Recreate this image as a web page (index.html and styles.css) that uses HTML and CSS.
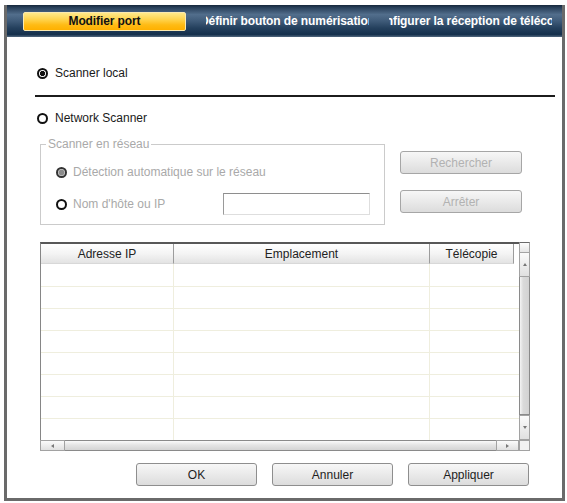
FILE: index.html
```html
<!DOCTYPE html>
<html lang="fr">
<head>
<meta charset="utf-8">
<title>Modifier port</title>
<link rel="stylesheet" href="styles.css">
</head>
<body>
<div class="window">
  <div class="tabbar">
    <div class="tab active"><span>Modifier port</span></div>
    <div class="tab"><span>Définir bouton de numérisation</span></div>
    <div class="tab"><span>Configurer la réception de télécopie</span></div>
  </div>
  <div class="content">
    <div class="radio-row row-local"><span class="radio checked"></span><span>Scanner local</span></div>
    <div class="separator"></div>
    <div class="radio-row row-network"><span class="radio"></span><span>Network Scanner</span></div>
    <div class="section">
      <fieldset class="group">
        <legend>Scanner en réseau</legend>
        <div class="group-body">
          <div class="radio-row disabled row-auto"><span class="radio checked-disabled"></span><span>Détection automatique sur le réseau</span></div>
          <div class="radio-row disabled row-host"><span class="radio"></span><span class="host-label">Nom d'hôte ou IP</span><span class="textbox"></span></div>
        </div>
      </fieldset>
      <div class="side-buttons">
        <div class="btn btn-disabled">Rechercher</div>
        <div class="btn btn-disabled">Arrêter</div>
      </div>
    </div>
    <div class="table">
      <div class="viewport">
        <div class="thead">
          <div class="th c1">Adresse IP</div>
          <div class="th c2">Emplacement</div>
          <div class="th c3">Télécopie</div>
        </div>
        <div class="tbody">
          <div class="tr first"><div class="td c1"></div><div class="td c2"></div><div class="td c3"></div></div>
          <div class="tr"><div class="td c1"></div><div class="td c2"></div><div class="td c3"></div></div>
          <div class="tr"><div class="td c1"></div><div class="td c2"></div><div class="td c3"></div></div>
          <div class="tr"><div class="td c1"></div><div class="td c2"></div><div class="td c3"></div></div>
          <div class="tr"><div class="td c1"></div><div class="td c2"></div><div class="td c3"></div></div>
          <div class="tr"><div class="td c1"></div><div class="td c2"></div><div class="td c3"></div></div>
          <div class="tr"><div class="td c1"></div><div class="td c2"></div><div class="td c3"></div></div>
          <div class="tr"><div class="td c1"></div><div class="td c2"></div><div class="td c3"></div></div>
        </div>
      </div>
      <div class="vscroll">
        <div class="vcorner"></div>
        <div class="sbtn vbtn up"><span class="arrow arrow-up"></span></div>
        <div class="vthumb"></div>
        <div class="sbtn vbtn down"><span class="arrow arrow-down"></span></div>
      </div>
      <div class="hscroll">
        <div class="sbtn hbtn left"><span class="arrow arrow-left"></span></div>
        <div class="hthumb"></div>
        <div class="sbtn hbtn right"><span class="arrow arrow-right"></span></div>
      </div>
      <div class="corner"></div>
    </div>
    <div class="actions">
      <div class="btn">OK</div>
      <div class="btn">Annuler</div>
      <div class="btn">Appliquer</div>
    </div>
  </div>
</div>
</body>
</html>
```

FILE: styles.css
```css
* { box-sizing: border-box; }

html, body {
  margin: 0;
  padding: 0;
  background: #ffffff;
}

body {
  font-family: "Liberation Sans", Arial, sans-serif;
  font-size: 12px;
  color: #1a1a1a;
}

.window {
  margin: 5px 0 0 4px;
  width: 561px;
  height: 496px;
  border: 3px solid #6a6a6a;
  border-top: 0;
  background: #ffffff;
  display: flex;
  flex-direction: column;
}

/* ---------- tab bar ---------- */
.tabbar {
  height: 32px;
  flex: none;
  display: flex;
  align-items: center;
  gap: 20px;
  padding-left: 16px;
  overflow: hidden;
  background: linear-gradient(to bottom,
    #16273b 0%,
    #283f59 8%,
    #526e8c 30%,
    #3f5b79 50%,
    #24405d 72%,
    #15304c 92%,
    #52687f 100%);
}

.tab {
  width: 163px;
  height: 19px;
  flex: none;
  display: flex;
  align-items: center;
  justify-content: center;
  overflow: hidden;
  white-space: nowrap;
  font-weight: bold;
  font-size: 12px;
  letter-spacing: -0.1px;
  color: #ffffff;
}

.tab.active {
  color: #111111;
  border: 1px solid #fbe9b0;
  border-radius: 2px;
  background: linear-gradient(to bottom, #ffe98a 0%, #ffd24a 40%, #ffbb14 70%, #ffb000 100%);
}

/* ---------- content ---------- */
.content {
  flex: 1;
  padding: 0 7px 0 28px;
  display: flex;
  flex-direction: column;
}

.radio-row {
  display: flex;
  align-items: center;
  height: 16px;
  white-space: nowrap;
}

.radio {
  width: 11px;
  height: 11px;
  flex: none;
  border: 2px solid #111111;
  border-radius: 50%;
  background: #ffffff;
  margin-right: 7px;
}

.radio.checked {
  background: radial-gradient(circle, #111111 0 2.4px, #ffffff 2.9px);
}

.radio.checked-disabled {
  border-color: #333333;
  background: radial-gradient(circle, #8c8c8c 0 2.6px, #d6d6d6 3.2px);
}

.row-local {
  margin-top: 28px;
  padding-left: 2px;
}

.separator {
  margin-top: 14px;
  height: 2px;
  background: #1c1c1c;
  flex: none;
}

.row-network {
  margin-top: 13px;
  padding-left: 2px;
}

/* ---------- network group ---------- */
.section {
  margin-top: 11px;
  display: flex;
  align-items: flex-start;
}

.group {
  margin: 0 0 0 5px;
  padding: 0;
  width: 345px;
  border: 1px solid #cbcbcb;
  min-inline-size: 0;
}

.group legend {
  margin-left: 5px;
  padding: 0 2px;
  line-height: 14px;
  color: #a9a9a9;
  font-size: 12px;
}

.group-body {
  padding: 0 0 9px 15px;
}

.radio-row.disabled {
  color: #a9a9a9;
}

.radio-row.disabled .radio {
  margin-right: 6px;
}

.row-auto {
  margin-top: 13px;
}

.row-host {
  margin-top: 13px;
  height: 22px;
}

.host-label {
  width: 150px;
  flex: none;
}

.textbox {
  width: 147px;
  height: 22px;
  flex: none;
  background: #ffffff;
  border-top: 1px solid #8e8e8e;
  border-left: 1px solid #9a9a9a;
  border-right: 1px solid #dedede;
  border-bottom: 1px solid #dedede;
}

.side-buttons {
  margin-left: 15px;
  padding-top: 14px;
  width: 122px;
  display: flex;
  flex-direction: column;
  gap: 16px;
}

.btn {
  height: 23px;
  display: flex;
  align-items: center;
  justify-content: center;
  border: 1px solid #8e8e8e;
  border-radius: 3px;
  background: linear-gradient(to bottom, #f7f7f7 0%, #ebebeb 45%, #dcdcdc 100%);
  color: #1e1e1e;
  font-size: 12px;
  white-space: nowrap;
}

.btn-disabled {
  color: #b2b2b2;
  border-color: #a6a6a6;
}

/* ---------- table ---------- */
.table {
  margin: 17px 0 0 5px;
  width: 490px;
  height: 209px;
  display: grid;
  grid-template-columns: 479px 11px;
  grid-template-rows: 198px 11px;
  flex: none;
}

.viewport {
  border-left: 1px solid #868686;
  border-top: 2px solid #585858;
  background: #ffffff;
  overflow: hidden;
}

.thead {
  display: flex;
  height: 20px;
}

.th {
  height: 20px;
  display: flex;
  align-items: center;
  justify-content: center;
  background: linear-gradient(to bottom, #ffffff 0%, #f4f4f4 50%, #e3e3e3 100%);
  border-right: 1px solid #9c9c9c;
  border-bottom: 1px solid #d8d8d8;
  color: #222222;
  white-space: nowrap;
}

.c1 { width: 133px; flex: none; }
.c2 { width: 256px; flex: none; }
.c3 { width: 84px; flex: none; }

.tr {
  display: flex;
  height: 22px;
  border-bottom: 1px solid #efeede;
}

.tr.first {
  height: 23px;
}

.td.c1, .td.c2 {
  border-right: 1px solid #efeede;
}

/* scrollbars */
.vscroll {
  display: flex;
  flex-direction: column;
}

.vcorner {
  height: 11px;
  flex: none;
  border: 1px solid #a4a4a4;
  border-top-color: #6a6a6a;
  background: linear-gradient(to bottom, #fdfdfd, #e6e6e6);
}

.sbtn {
  flex: none;
  display: flex;
  align-items: center;
  justify-content: center;
  border: 1px solid #a2a2a2;
  background: linear-gradient(to bottom, #fbfbfb, #e0e0e0);
}

.vbtn.up { height: 24px; border-top: 0; }
.vbtn.down { height: 25px; }

.vthumb {
  flex: 1;
  border: 1px solid #8a8a8a;
  border-top: 0;
  background: linear-gradient(to right, #f4f4f4 0%, #dadada 35%, #d2d2d2 100%);
}

.hscroll {
  display: flex;
}

.hbtn.left { width: 25px; }
.hbtn.right { width: 23px; }

.hthumb {
  flex: 1;
  border: 1px solid #8a8a8a;
  border-left: 0;
  border-right: 0;
  background: linear-gradient(to bottom, #fafafa 0%, #e4e4e4 45%, #d4d4d4 100%);
}

.corner {
  border: 1px solid #a2a2a2;
  background: #f2f2f2;
}

.arrow {
  width: 0;
  height: 0;
  border: 2px solid transparent;
}

.arrow-up { border-bottom: 3px solid #777777; border-top-width: 0; }
.arrow-down { border-top: 3px solid #777777; border-bottom-width: 0; }
.arrow-left { border-right: 3px solid #777777; border-left-width: 0; }
.arrow-right { border-left: 3px solid #777777; border-right-width: 0; }

/* ---------- dialog buttons ---------- */
.actions {
  margin-top: 12px;
  padding-right: 26px;
  display: flex;
  justify-content: flex-end;
  gap: 15px;
}

.actions .btn {
  width: 121px;
}
```
